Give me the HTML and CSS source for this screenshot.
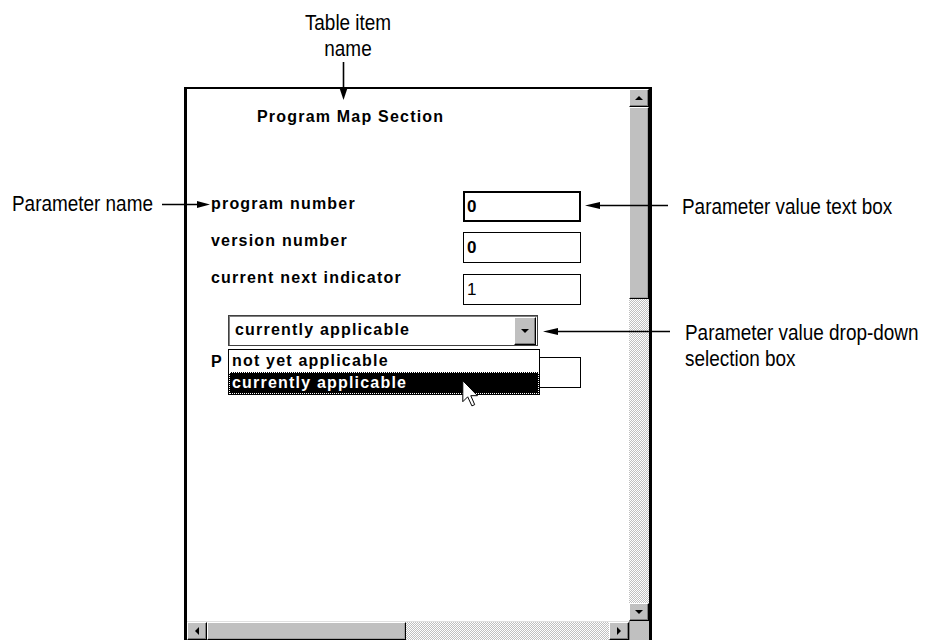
FILE: index.html
```html
<!DOCTYPE html>
<html>
<head>
<meta charset="utf-8">
<title>Program Map Section</title>
<link rel="stylesheet" href="styles.css">
</head>
<body>
<div class="page">
  <div class="window">
    <div class="content">
      <div class="title">Program Map Section</div>
      <div class="form">
        <div class="row r1"><span class="label l1">program number</span><span class="box focus">0</span></div>
        <div class="row r2"><span class="label l2">version number</span><span class="box">0</span></div>
        <div class="row r3"><span class="label l3">current next indicator</span><span class="box thin">1</span></div>
        <div class="combo"><span class="combo-text">currently applicable</span><span class="combo-btn"><span class="tri-down"></span></span></div>
        <div class="row r5"><span class="label l5">P</span><span class="box"></span></div>
      </div>
      <div class="list">
        <div class="item">not yet applicable</div>
        <div class="item sel">currently applicable</div>
      </div>
      <svg class="cursor" width="17" height="28" viewBox="0 0 12 20"><polygon points="0.5,0.5 0.5,15.5 4,12 7,18.5 9,17.6 6.2,11.2 11,11.2" fill="#fff" stroke="#000" stroke-width="1" vector-effect="non-scaling-stroke" stroke-linejoin="miter"/></svg>
    </div>
    <div class="vscroll">
      <div class="sbtn"><span class="tri-up"></span></div>
      <div class="thumb"></div>
      <div class="track"></div>
      <div class="sbtn"><span class="tri-down"></span></div>
    </div>
    <div class="hscroll">
      <div class="sbtn"><span class="tri-left"></span></div>
      <div class="thumb"></div>
      <div class="track"></div>
      <div class="sbtn"><span class="tri-right"></span></div>
    </div>
    <div class="corner"></div>
  </div>

  <div class="callout c-table">Table item<br>name</div>
  <div class="callout c-pname">Parameter name</div>
  <div class="callout c-pvalue">Parameter value text box</div>
  <div class="callout c-pdrop">Parameter value drop-down<br>selection box</div>

  <svg class="arrows" width="927" height="640" viewBox="0 0 927 640">
    <line x1="343.5" y1="62" x2="343.5" y2="90" stroke="#000" stroke-width="1.6"/>
    <polygon points="339.5,88 347.5,88 343.5,100" fill="#000"/>
    <line x1="162" y1="204.5" x2="200" y2="204.5" stroke="#000" stroke-width="1.6"/>
    <polygon points="197,201 197,208 210,204.5" fill="#000"/>
    <line x1="595" y1="205.5" x2="668" y2="205.5" stroke="#000" stroke-width="1.6"/>
    <polygon points="585,205.5 600,202 600,209" fill="#000"/>
    <line x1="553" y1="331.5" x2="670" y2="331.5" stroke="#000" stroke-width="1.6"/>
    <polygon points="543,331.5 558,328 558,335" fill="#000"/>
  </svg>
</div>
</body>
</html>
```

FILE: styles.css
```css
* { box-sizing: border-box; }
html, body { margin: 0; padding: 0; background: #fff; }

.page {
  position: relative;
  width: 927px;
  height: 640px;
  overflow: hidden;
  padding: 87px 0 0 184px;
  font-family: "Liberation Sans", Arial, sans-serif;
  color: #000;
}

.window {
  width: 468px;
  height: 553px;
  border: solid #000;
  border-width: 2px 3px 0 3px;
  display: grid;
  grid-template-columns: 442px 20px;
  grid-template-rows: 532px 19px;
}

.content {
  position: relative;
  background: #fff;
  overflow: hidden;
  font-weight: bold;
  font-size: 16px;
  letter-spacing: 1.2px;
}

.title { margin: 19px 0 0 70px; line-height: 18px; }

.form { margin-top: 65px; padding-left: 24px; }

.row {
  display: grid;
  grid-template-columns: 252px 118px;
  align-items: start;
  height: 31px;
}
.r1 { margin-bottom: 10px; }
.r2 { margin-bottom: 11px; }
.r3 { margin-bottom: 10px; }

.label { line-height: 18px; white-space: nowrap; }
.l1 { margin-top: 4px; }
.l2 { margin-top: 0; }
.l3 { margin-top: -5px; }
.l5 { margin-top: -4px; }

.box {
  height: 31px;
  border: 1px solid #000;
  font-size: 17px;
  line-height: 29px;
  padding-left: 3px;
  letter-spacing: 0;
}
.box.focus { border-width: 2px; line-height: 27px; padding-left: 2px; }
.box.thin { font-weight: normal; }

.combo {
  margin: 0 0 11px 17px;
  width: 310px;
  height: 31px;
  border: 1px solid #404040;
  box-shadow: inset 1px 1px 0 #808080;
  display: flex;
  align-items: center;
  justify-content: space-between;
  padding: 1px 1px 1px 6px;
}
.combo-text { line-height: 18px; margin-top: -2px; }
.combo-btn {
  width: 22px;
  height: 28px;
  background: #c0c0c0;
  border: 1px solid;
  border-color: #fff #000 #000 #fff;
  box-shadow: inset -1px -1px 0 #808080;
  display: flex;
  align-items: center;
  justify-content: center;
}

.list {
  position: absolute;
  left: 41px;
  top: 260px;
  width: 312px;
  height: 46px;
  border: 1px solid #000;
  background: #fff;
}
.item { height: 22px; line-height: 21px; padding-left: 3px; white-space: nowrap; }
.item.sel {
  background: #000;
  color: #fff;
  outline: 1px dotted #fff;
  outline-offset: -1px;
}

.cursor { position: absolute; left: 275px; top: 291px; }

/* scrollbars */
.vscroll { display: flex; flex-direction: column; background: #c0c0c0; }
.hscroll { display: flex; flex-direction: row; background: #c0c0c0; border-top: 1px solid #e0e0e0; }
.sbtn {
  flex: none;
  background: #c0c0c0;
  border: 1px solid;
  border-color: #fff #000 #000 #fff;
  box-shadow: inset -1px -1px 0 #808080;
  display: flex;
  align-items: center;
  justify-content: center;
}
.vscroll .sbtn { height: 18px; }
.hscroll .sbtn { width: 20px; }
.thumb {
  flex: none;
  background: #c0c0c0;
  border: 1px solid;
  border-color: #fff #000 #000 #fff;
  box-shadow: inset -1px -1px 0 #a0a0a0;
}
.vscroll .thumb { height: 192px; }
.hscroll .thumb { width: 199px; }
.track {
  flex: 1;
  background-image: repeating-conic-gradient(#c0c0c0 0 25%, #fff 0 50%);
  background-size: 2px 2px;
}
.corner { background: #c0c0c0; border-left: 1px solid #808080; }

.tri-up { width: 0; height: 0; border-left: 4px solid transparent; border-right: 4px solid transparent; border-bottom: 4px solid #000; }
.tri-down { width: 0; height: 0; border-left: 4px solid transparent; border-right: 4px solid transparent; border-top: 4px solid #000; }
.tri-left { width: 0; height: 0; border-top: 4px solid transparent; border-bottom: 4px solid transparent; border-right: 4px solid #000; }
.tri-right { width: 0; height: 0; border-top: 4px solid transparent; border-bottom: 4px solid transparent; border-left: 4px solid #000; }

/* callouts */
.callout {
  position: absolute;
  font-family: "Liberation Sans", Arial, sans-serif;
  font-size: 22px;
  line-height: 26px;
  white-space: nowrap;
  transform: scaleX(0.86);
  transform-origin: 0 0;
}
.c-table { left: 288px; top: 10px; width: 120px; text-align: center; transform-origin: 60px 0; }
.c-pname { left: 12px; top: 191px; }
.c-pvalue { left: 682px; top: 194px; }
.c-pdrop { left: 685px; top: 320px; }

.arrows { position: absolute; left: 0; top: 0; pointer-events: none; }
```
